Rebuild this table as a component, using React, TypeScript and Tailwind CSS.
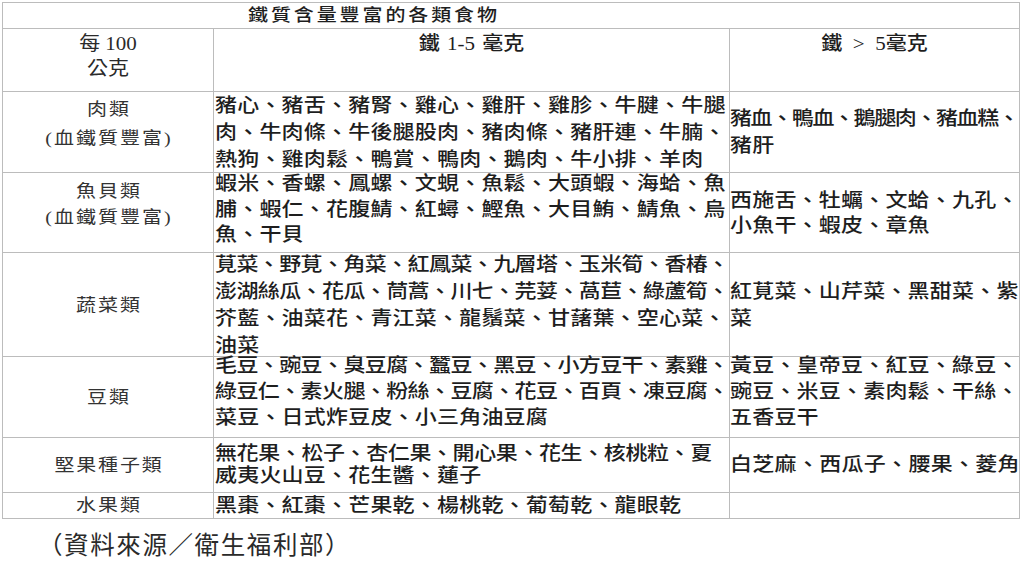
import React from "react";

const FONT = "font-['Liberation_Serif','Noto_Sans_CJK_TC','Noto_Sans_CJK_JP',serif]";

type L = string | [string, string];

function Lines({ lines, base }: { lines: L[]; base: string }) {
  return (
    <>
      {lines.map((l, i) => {
        const text = typeof l === "string" ? l : l[0];
        const cls = typeof l === "string" ? base : l[1];
        return (
          <div key={i} className={`whitespace-nowrap scale-y-[0.88] ${cls}`}>
            {text}
          </div>
        );
      })}
    </>
  );
}

const N = "tracking-[0.2px]";
const T = "tracking-[-0.6px]";

const labelCls =
  "bg-white flex flex-col items-center text-[20px] font-normal pl-[2px] text-[#333333]";
const c2Cls = "bg-white flex flex-col pl-[1px] text-[22px] font-medium text-[#1e1e1e]";
const c3Cls = "bg-white flex flex-col text-[22px] font-medium text-[#1e1e1e]";
const LB = "tracking-[2px]";

export default function App() {
  return (
    <div className={`w-[1024px] h-[576px] overflow-hidden bg-white pt-[2px] pl-[2px] ${FONT}`}>
      <div className="grid w-[1018px] grid-cols-[210px_515px_289px] grid-rows-[25px_62px_80px_79px_103px_80px_54px_25px] gap-px bg-[#bcbcbc] p-px">
        {/* title */}
        <div className="col-span-3 bg-white flex items-center pl-[245px] text-[20px] font-medium leading-[25px] text-[#1e1e1e]">
          <div className="scale-y-[0.88] tracking-[2.9px]">鐵質含量豐富的各類食物</div>
        </div>

        {/* header */}
        <div className="bg-white flex flex-col items-center pt-[3px] text-[21px] font-normal leading-[25px] text-[#2a2a2a]">
          <div className="scale-y-[0.9]">每 100</div>
          <div className="scale-y-[0.9]">公克</div>
        </div>
        <div className="bg-white flex flex-col items-center pt-[3px] text-[21px] font-medium leading-[25px] text-[#1e1e1e] [word-spacing:2px]">
          <div className="scale-y-[0.9]">鐵 1-5 毫克</div>
        </div>
        <div className="bg-white flex flex-col items-center pt-[3px] text-[21px] font-medium leading-[25px] text-[#1e1e1e]">
          <div className="scale-y-[0.9]">{"鐵\u00a0\u00a0>\u00a0\u00a05毫克"}</div>
        </div>

        {/* 肉類 */}
        <div className={`${labelCls} justify-start pt-[3px] leading-[29px]`}>
          <Lines base={LB} lines={["肉類", "(血鐵質豐富)"]} />
        </div>
        <div className={`${c2Cls} justify-center leading-[27px]`}>
          <Lines
            base={N}
            lines={[
              "豬心、豬舌、豬腎、雞心、雞肝、雞胗、牛腱、牛腿",
              "肉、牛肉條、牛後腿股肉、豬肉條、豬肝連、牛腩、",
              "熱狗、雞肉鬆、鴨賞、鴨肉、鵝肉、牛小排、羊肉",
            ]}
          />
        </div>
        <div className={`${c3Cls} justify-center leading-[27px]`}>
          <Lines base={N} lines={[["豬血、鴨血、鵝腿肉、豬血糕、", "tracking-[-1.4px]"], "豬肝"]} />
        </div>

        {/* 魚貝類 */}
        <div className={`${labelCls} justify-start pt-[5px] leading-[26px]`}>
          <Lines base={LB} lines={["魚貝類", "(血鐵質豐富)"]} />
        </div>
        <div className={`${c2Cls} justify-center pb-[6px] leading-[25.5px]`}>
          <Lines
            base={N}
            lines={[
              "蝦米、香螺、鳳螺、文蜆、魚鬆、大頭蝦、海蛤、魚",
              "脯、蝦仁、花腹鯖、紅蟳、鰹魚、大目鮪、鯖魚、烏",
              "魚、干貝",
            ]}
          />
        </div>
        <div className={`${c3Cls} justify-center leading-[25px]`}>
          <Lines base={N} lines={["西施舌、牡蠣、文蛤、九孔、", "小魚干、蝦皮、章魚"]} />
        </div>

        {/* 蔬菜類 */}
        <div className={`${labelCls} justify-center leading-[26px]`}>
          <Lines base={LB} lines={["蔬菜類"]} />
        </div>
        <div className={`${c2Cls} justify-center leading-[27px]`}>
          <Lines
            base={N}
            lines={[
              ["莧菜、野莧、角菜、紅鳳菜、九層塔、玉米筍、香椿、", T],
              ["澎湖絲瓜、花瓜、茼蒿、川七、芫荽、萵苣、綠蘆筍、", T],
              "芥藍、油菜花、青江菜、龍鬚菜、甘藷葉、空心菜、",
              "油菜",
            ]}
          />
        </div>
        <div className={`${c3Cls} justify-center leading-[27px]`}>
          <Lines base={N} lines={["紅莧菜、山芹菜、黑甜菜、紫", "菜"]} />
        </div>

        {/* 豆類 */}
        <div className={`${labelCls} justify-center leading-[26px]`}>
          <Lines base={LB} lines={["豆類"]} />
        </div>
        <div className={`${c2Cls} justify-center pb-[10px] leading-[26.3px]`}>
          <Lines
            base={N}
            lines={[
              ["毛豆、豌豆、臭豆腐、蠶豆、黑豆、小方豆干、素雞、", T],
              ["綠豆仁、素火腿、粉絲、豆腐、花豆、百頁、凍豆腐、", T],
              "菜豆、日式炸豆皮、小三角油豆腐",
            ]}
          />
        </div>
        <div className={`${c3Cls} justify-center pb-[10px] leading-[26.3px]`}>
          <Lines base={N} lines={["黃豆、皇帝豆、紅豆、綠豆、", "豌豆、米豆、素肉鬆、干絲、", "五香豆干"]} />
        </div>

        {/* 堅果種子類 */}
        <div className={`${labelCls} justify-center leading-[26px]`}>
          <Lines base="tracking-[1.8px]" lines={["堅果種子類"]} />
        </div>
        <div className={`${c2Cls} justify-center leading-[22.5px]`}>
          <Lines
            base={N}
            lines={[
              ["無花果、松子、杏仁果、開心果、花生、核桃粒、夏", "tracking-[-0.4px]"],
              "威夷火山豆、花生醬、蓮子",
            ]}
          />
        </div>
        <div className={`${c3Cls} justify-center leading-[26px]`}>
          <Lines base="tracking-[0.3px]" lines={["白芝麻、西瓜子、腰果、菱角"]} />
        </div>

        {/* 水果類 */}
        <div className={`${labelCls} justify-center leading-[25px]`}>
          <Lines base={LB} lines={["水果類"]} />
        </div>
        <div className={`${c2Cls} justify-center leading-[25px]`}>
          <Lines base={N} lines={["黑棗、紅棗、芒果乾、楊桃乾、葡萄乾、龍眼乾"]} />
        </div>
        <div className="bg-white" />
      </div>

      <div className="mt-[12px] pl-[36px] text-[24.5px] font-normal tracking-[1.6px] leading-[30px] text-[#2a2a2a]">
        （資料來源／衛生福利部）
      </div>
    </div>
  );
}
